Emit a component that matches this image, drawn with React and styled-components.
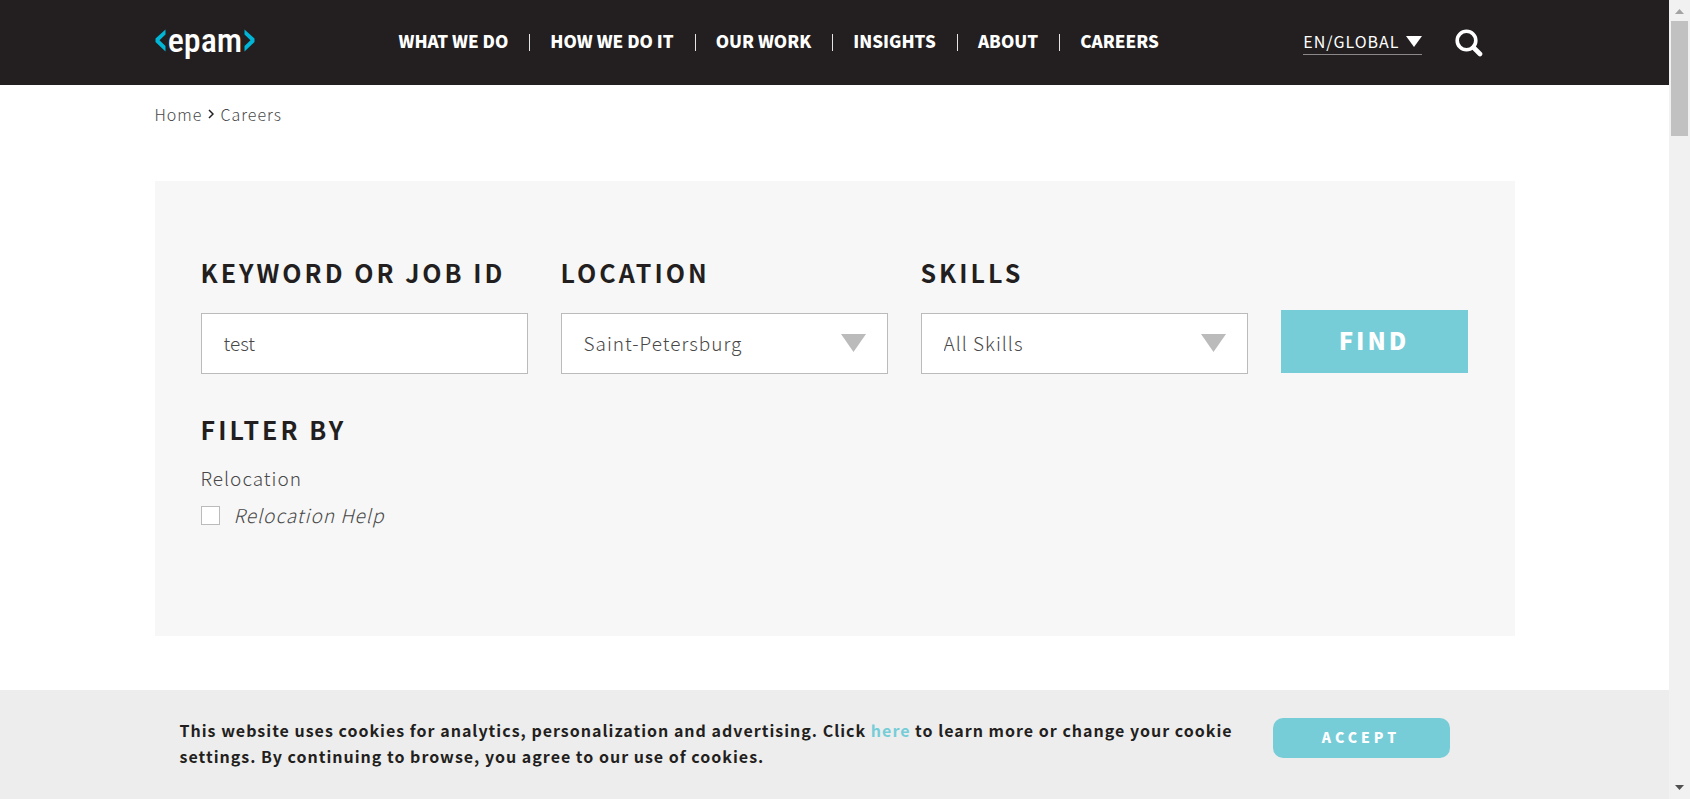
import React from "react";
import styled, { createGlobalStyle, css } from "styled-components";

const GlobalStyle = createGlobalStyle`
  *, *::before, *::after { box-sizing: border-box; }
  body {
    margin: 0;
    background: #fff;
    color: #231f20;
    font-family: "Noto Sans CJK SC", "Open Sans", sans-serif;
    font-size: 16px;
    line-height: 26px;
  }
  button, input, select { font: inherit; color: inherit; margin: 0; }
  a { color: inherit; text-decoration: none; }
`;

const lightText = css`
  font-size: 19px;
  font-weight: 300;
  line-height: 26px;
  letter-spacing: 1px;
  color: #484848;
`;

const Window = styled.div`
  display: flex;
  min-height: 100vh;
`;

const Page = styled.div`
  flex: 1;
  min-width: 0;
  display: flex;
  flex-direction: column;
`;

const Container = styled.div`
  width: 100%;
  max-width: 1360px;
  margin: 0 auto;
`;

const Header = styled.header`
  background: #231f20;
  color: #fff;
`;

const HeaderRow = styled(Container)`
  display: flex;
  align-items: center;
  height: 85px;
  padding-right: 32px;
`;

const Logo = styled.a`
  display: block;
  height: 44px;
  svg { display: block; }
`;

const LogoText = styled.text`
  font-family: "Roboto Condensed", "Noto Sans ExtraCondensed", sans-serif;
  font-size: 34px;
  font-weight: 500;
`;

const Nav = styled.nav`
  margin-left: 144px;
  padding-bottom: 3px;
`;

const NavList = styled.ul`
  display: flex;
  margin: 0;
  padding: 0;
  list-style: none;
`;

const NavItem = styled.li`
  display: flex;
  align-items: center;
  & + &::before {
    content: "";
    width: 1px;
    height: 17px;
    margin: 2px 20px 0 21px;
    background: #e4e4e4;
  }
`;

const NavLink = styled.a`
  font-size: 17px;
  font-weight: 900;
  line-height: 24px;
  white-space: nowrap;
`;

const Language = styled.button`
  display: flex;
  align-items: center;
  gap: 6px;
  margin-left: auto;
  padding: 0 0 2px;
  border: 0;
  border-bottom: 1px solid #8a8889;
  background: none;
  font-size: 16px;
  line-height: 22px;
  letter-spacing: 1px;
`;

const SearchButton = styled.button`
  margin-left: 33px;
  padding: 0;
  border: 0;
  background: none;
  svg { display: block; }
`;

const Breadcrumbs = styled.nav`
  display: flex;
  align-items: center;
  gap: 6px;
  padding: 16px 0 54px;
  font-weight: 300;
  letter-spacing: 1px;
  color: #484848;
`;

const Panel = styled.form`
  min-height: 455px;
  padding: 75px 47px 40px 46px;
  background: #f7f7f7;
`;

const SearchGrid = styled.div`
  display: grid;
  grid-template-columns: repeat(3, minmax(0, 327fr)) minmax(0, 187fr);
  column-gap: 33px;
  align-items: end;
`;

const Field = styled.div`
  display: flex;
  flex-direction: column;
  gap: 25px;
`;

const titleText = css`
  margin: 0;
  font-size: 25px;
  font-weight: 700;
  line-height: 32px;
  letter-spacing: 3px;
  color: #231f20;
`;

const FieldLabel = styled.label`
  ${titleText}
  white-space: nowrap;
`;

const box = css`
  ${lightText}
  width: 100%;
  height: 61px;
  padding: 0 22px 2px;
  border: 1px solid #bbb;
  border-radius: 0;
  background: #fff;
  outline: none;
`;

const TextInput = styled.input`
  ${box}
  letter-spacing: 0;
`;

const SelectWrap = styled.div`
  position: relative;
  svg {
    position: absolute;
    top: 21px;
    right: 22px;
    pointer-events: none;
  }
`;

const Select = styled.select`
  ${box}
  appearance: none;
`;

const FindButton = styled.button`
  height: 63px;
  margin-bottom: 1px;
  padding: 0 0 4px;
  border: 0;
  background: #76cdd8;
  color: #fff;
  font-size: 24px;
  font-weight: 900;
  line-height: 32px;
  letter-spacing: 3px;
`;

const Filters = styled.fieldset`
  margin: 39px 0 0;
  padding: 0;
  border: 0;
`;

const FilterTitle = styled.legend`
  ${titleText}
  padding: 0;
`;

const FilterGroup = styled.p`
  ${lightText}
  margin: 20px 0 11px;
`;

const CheckLabel = styled.label`
  ${lightText}
  display: flex;
  align-items: center;
  gap: 14px;
  font-style: italic;
`;

const Checkbox = styled.input`
  appearance: none;
  width: 19px;
  height: 19px;
  border: 1px solid #bbb;
  background: #fff;
`;

const CookieBar = styled.section`
  margin-top: auto;
  background: #ededed;
`;

const CookieRow = styled(Container)`
  display: flex;
  align-items: flex-start;
  justify-content: space-between;
  padding: 27px 65px 30px 25px;
`;

const CookieText = styled.p`
  max-width: 1060px;
  margin: 0;
  font-weight: 700;
  letter-spacing: 1px;
`;

const CookieLink = styled.a`
  color: #76cdd8;
`;

const AcceptButton = styled.button`
  width: 177px;
  height: 40px;
  margin-top: 1px;
  padding: 0 0 2px;
  border: 0;
  border-radius: 10px;
  background: #76cdd8;
  color: #fff;
  font-size: 14px;
  font-weight: 900;
  letter-spacing: 4px;
`;

const ScrollTrack = styled.div`
  position: sticky;
  top: 0;
  display: flex;
  flex-direction: column;
  align-items: center;
  width: 21px;
  height: 100vh;
  padding: 9px 0;
  background: #f1f1f1;
`;

const ScrollThumb = styled.div`
  width: 17px;
  height: 115px;
  margin: 7px 0 auto;
  background: #c1c1c1;
`;

const Triangle = ({ width, height, fill, up }) => (
  <svg width={width} height={height} viewBox="0 0 10 10" preserveAspectRatio="none" aria-hidden="true">
    <polygon points={up ? "0,10 10,10 5,0" : "0,0 10,0 5,10"} fill={fill} />
  </svg>
);

const navItems = ["WHAT WE DO", "HOW WE DO IT", "OUR WORK", "INSIGHTS", "ABOUT", "CAREERS"];

export default function App() {
  return (
    <Window>
      <GlobalStyle />
      <Page>
        <Header>
          <HeaderRow>
            <Logo href="#" aria-label="epam">
              <svg width="100" height="44" viewBox="0 0 100 44">
                <path d="M10.500 8.500 L0.500 17.500 V21 L10.500 30.500 V25 L4.500 19.300 L10.500 13.500 Z" fill="#00b5d6" />
                <path d="M89.500 8.500 L99.500 17.500 V21 L89.500 30.500 V25 L95.500 19.300 L89.500 13.500 Z" fill="#00b5d6" />
                <LogoText x="50" y="31" textAnchor="middle" fill="#fff">
                  epam
                </LogoText>
              </svg>
            </Logo>
            <Nav aria-label="Main">
              <NavList>
                {navItems.map((item) => (
                  <NavItem key={item}>
                    <NavLink href="#">{item}</NavLink>
                  </NavItem>
                ))}
              </NavList>
            </Nav>
            <Language type="button">
              EN/GLOBAL
              <Triangle width={16} height={11} fill="#fff" />
            </Language>
            <SearchButton type="button" aria-label="Search">
              <svg width="28" height="28" viewBox="0 0 28 28" fill="none" stroke="#fff">
                <circle cx="11.500" cy="11.500" r="9.300" strokeWidth="3.600" />
                <path d="M18.500 18.500 L25 25" strokeWidth="4.600" strokeLinecap="round" />
              </svg>
            </SearchButton>
          </HeaderRow>
        </Header>

        <Container as="main">
          <Breadcrumbs aria-label="Breadcrumb">
            <a href="#">Home</a>
            <svg width="6" height="10" viewBox="0 0 6 10" fill="none" stroke="#231f20" strokeWidth="1.500" aria-hidden="true">
              <path d="M1 1 L5 5 L1 9" />
            </svg>
            <a href="#">Careers</a>
          </Breadcrumbs>

          <Panel onSubmit={(event) => event.preventDefault()}>
            <SearchGrid>
              <Field>
                <FieldLabel htmlFor="keyword">KEYWORD OR JOB ID</FieldLabel>
                <TextInput id="keyword" type="text" defaultValue="test" />
              </Field>
              <Field>
                <FieldLabel htmlFor="location">LOCATION</FieldLabel>
                <SelectWrap>
                  <Select id="location">
                    <option>Saint-Petersburg</option>
                  </Select>
                  <Triangle width={25} height={18} fill="#bbb" />
                </SelectWrap>
              </Field>
              <Field>
                <FieldLabel htmlFor="skills">SKILLS</FieldLabel>
                <SelectWrap>
                  <Select id="skills">
                    <option>All Skills</option>
                  </Select>
                  <Triangle width={25} height={18} fill="#bbb" />
                </SelectWrap>
              </Field>
              <FindButton type="submit">FIND</FindButton>
            </SearchGrid>

            <Filters>
              <FilterTitle>FILTER BY</FilterTitle>
              <FilterGroup>Relocation</FilterGroup>
              <CheckLabel>
                <Checkbox type="checkbox" />
                Relocation Help
              </CheckLabel>
            </Filters>
          </Panel>
        </Container>

        <CookieBar aria-label="Cookies">
          <CookieRow>
            <CookieText>
              This website uses cookies for analytics, personalization and advertising. Click{" "}
              <CookieLink href="#">here</CookieLink> to learn more or change your cookie settings. By continuing to
              browse, you agree to our use of cookies.
            </CookieText>
            <AcceptButton type="button">ACCEPT</AcceptButton>
          </CookieRow>
        </CookieBar>
      </Page>
      <ScrollTrack aria-hidden="true">
        <Triangle up width={9} height={5} fill="#a3a3a3" />
        <ScrollThumb />
        <Triangle width={9} height={5} fill="#505050" />
      </ScrollTrack>
    </Window>
  );
}
